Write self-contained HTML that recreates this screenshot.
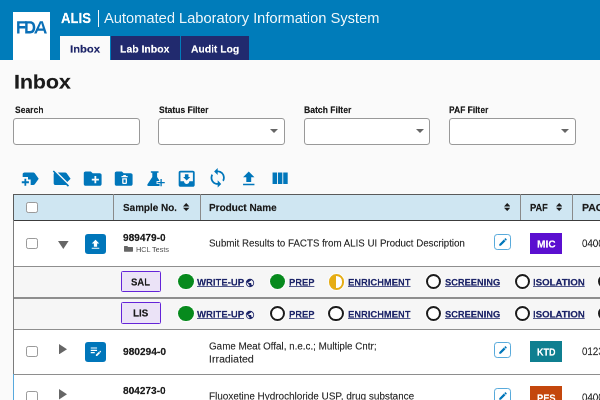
<!DOCTYPE html>
<html>
<head>
<meta charset="utf-8">
<title>ALIS</title>
<style>
*{box-sizing:border-box;margin:0;padding:0}
html,body{width:600px;height:400px;overflow:hidden;background:#fafafa;font-family:"Liberation Sans",sans-serif;color:#1b1b1b}
div,svg{position:absolute}
.t{white-space:nowrap;line-height:1;transform-origin:0 0;will-change:transform}
.b{font-weight:bold;-webkit-text-stroke:.35px}
.w{color:#fff}
.nv{color:#1c2468}
.g{color:#555}
.p{color:#2e2e2e;-webkit-text-stroke:.3px #2e2e2e}
.u{text-decoration:underline;text-decoration-thickness:2px;text-underline-offset:1.200px;text-decoration-skip-ink:none;text-decoration-color:rgba(28,36,104,.75)}
#hdr{left:0;top:0;width:600px;height:60px;background:#007cba}
#logo{left:13px;top:12px;width:37.2px;height:48px;background:#fff}
.tab{top:36px;height:24px;background:#212a6e}
.inp{top:118px;width:126.5px;height:26.5px;border:1px solid #999;border-radius:3px;background:#fff}
.arr{top:129.1px;width:0;height:0;border-left:4px solid transparent;border-right:4px solid transparent;border-top:4px solid #666}
.cb{left:26.1px;width:11.5px;height:11.3px;border:1.2px solid #9a9a9a;border-radius:2.2px;background:#fff}
.hl{left:13px;width:587px;height:1.200px;background:#8e8e8e}
.vl{top:194px;width:1px;height:26px;background:#8a8a8a}
.btn{left:85.2px;width:20.5px;height:20.6px;border-radius:3px;background:#0076ba}
.ed{left:494px;width:17px;height:16.300px;border:1.250px solid #58aadb;border-radius:3.200px;background:#fff}
.bdg{left:530px;width:32px;height:21.4px}
.tag{left:120.5px;width:40px;height:21.6px;border:1.7px solid #6424d8;border-radius:1.5px;background:#ebe3f7}
.c{width:15.300px;height:15.300px;border-radius:50%;box-shadow:0 0 0 1px rgba(255,255,255,.7)}
.cg{background:#078a1d}
.ce{background:#fff;border:2px solid #1b1b1b}
.ch{border:2.200px solid #e6ad14;background:linear-gradient(90deg,#e6ad14 46%,#fff 46%);margin-left:.2px;width:15.800px;height:15.800px}
</style>
</head>
<body>
<div id="hdr"></div>
<div id="logo"></div>
<svg style="left:17px;top:20.5px" width="31" height="13" viewBox="17 20.5 31 13"><g fill="#0a6fb7">
<path d="M17.1 20.7h9.5v2.3h-7.1v2.600h6.100v2.300h-6.100v5h-2.400z"/>
<path fill-rule="evenodd" d="M25.200 20.700h4.900c3.600 0 5.200 2.500 5.200 6.100 0 3.700-1.600 6.100-5.200 6.100h-4.900zM27.600 23v7.600h2.300c2.100 0 2.900-1.600 2.900-3.800 0-2.200-.8-3.800-2.900-3.800z"/>
<path d="M34.100 32.900l5.800-12.200h2.900l4.100 12.200h-2.500l-.8-2.700h-6.300l.9-2.200h4.700l-1.700-5.600-4.600 10.500z"/>
</g></svg>
<div style="left:98px;top:10px;width:1.2px;height:16.7px;background:#fff;opacity:.95"></div>
<div class="tab" style="left:60.3px;width:49.7px;background:#fafafa"></div>
<div class="tab" style="left:110.6px;width:69.4px"></div>
<div class="tab" style="left:181.300px;width:67.300px"></div>

<div id="ti1" class="t b w" style="left:61.10px;top:11.01px;font-size:29.00px;transform:scale(0.45420,.5);">ALIS</div>
<div id="ti2" class="t w" style="left:104.10px;top:11.01px;font-size:29.00px;transform:scale(0.50549,.5);opacity:.93;">Automated Laboratory Information System</div>
<div id="tb1" class="t b nv" style="left:70.14px;top:44.01px;font-size:20.40px;transform:scale(0.55251,.5);">Inbox</div>
<div id="tb2" class="t b w" style="left:120.30px;top:44.01px;font-size:20.40px;transform:scale(0.51309,.5);">Lab Inbox</div>
<div id="tb3" class="t b w" style="left:190.81px;top:44.01px;font-size:20.40px;transform:scale(0.50623,.5);">Audit Log</div>
<div id="h1" class="t b" style="left:14.11px;top:72.21px;font-size:39.20px;transform:scale(0.54295,.5);">Inbox</div>
<div id="l1" class="t b" style="left:14.82px;top:105.51px;font-size:17.60px;transform:scale(0.48462,.5);">Search</div>
<div id="l2" class="t b" style="left:158.73px;top:105.51px;font-size:17.60px;transform:scale(0.48601,.5);">Status Filter</div>
<div id="l3" class="t b" style="left:303.73px;top:105.51px;font-size:17.60px;transform:scale(0.48887,.5);">Batch Filter</div>
<div id="l4" class="t b" style="left:448.78px;top:105.51px;font-size:17.60px;transform:scale(0.48062,.5);">PAF Filter</div>
<div class="inp" style="left:13px"></div>
<div class="inp" style="left:158.2px"></div>
<div class="arr" style="left:270.2px"></div>
<div class="inp" style="left:303.6px"></div>
<div class="arr" style="left:415.6px"></div>
<div class="inp" style="left:449px"></div>
<div class="arr" style="left:561px"></div>
<svg style="left:19.90px;top:167.6px" width="21.36" height="21.36" viewBox="0 0 24 24" fill="#0076ba"><path d="M21 12l-4.37 6.16c-.37.52-.98.84-1.63.84h-3v-6H9v-3H3V7c0-1.1.9-2 2-2h10c.65 0 1.26.31 1.63.84L21 12zM10 15H7v-3H5v3H2v2h3v3h2v-3h3v-2z"/></svg>
<svg style="left:51.05px;top:167.6px" width="21.36" height="21.36" viewBox="0 0 24 24" fill="#0076ba"><path d="M3.250 2.750l17 17L19 21l-2-2H5c-1.100 0-2-.9-2-2V7c0-.55.230-1.050.590-1.410L2 4l1.250-1.250zM22 12l-4.370-6.160C17.270 5.330 16.670 5 16 5H7.660l10.700 10.730L22 12z"/></svg>
<svg style="left:82.20px;top:167.6px" width="21.36" height="21.36" viewBox="0 0 24 24" fill="#0076ba"><path d="M20 6h-8l-2-2H4c-1.1 0-2 .9-2 2v12c0 1.1.9 2 2 2h16c1.1 0 2-.9 2-2V8c0-1.1-.9-2-2-2zm-1 8h-3v3h-2v-3h-3v-2h3V9h2v3h3v2z"/></svg>
<svg style="left:113.35px;top:167.6px" width="21.36" height="21.36" viewBox="0 0 24 24" fill="#0076ba"><path fill-rule="evenodd" d="M22 8v10c0 1.1-.9 2-2 2H4c-1.1 0-2-.9-2-2V6c0-1.1.9-2 2-2h6l2 2h8c1.1 0 2 .9 2 2zM16.5 10V9h-2V8h-3v1h-2v1.5h7zM10.3 11.5v5c0 .8.7 1.500 1.500 1.500h2.400c.8 0 1.500-.7 1.500-1.500v-5zM11.800 13h2.400v3.500h-2.400z"/></svg>
<svg style="left:144.50px;top:167.6px" width="21.36" height="21.36" viewBox="0 0 24 24" fill="#0076ba"><path d="M6.600 3.600H15.200V5.400H13.600V10L19 18.300C19.600 19.300 19.100 20.100 18 20.100H3.800C2.700 20.100 2.200 19.300 2.800 18.300L8.200 10V5.400H6.600Z"/><path d="M16.400 11.300h3.400v3.400h3.400v3.400h-3.400v3.400h-3.400v-3.400h-3.400v-3.400h3.400z" fill="#fafafa"/><path d="M17.350 12.400h1.500v3.350h3.350v1.500h-3.350v3.350h-1.500v-3.350h-3.350v-1.500h3.350z"/></svg>
<svg style="left:175.65px;top:167.6px" width="21.36" height="21.36" viewBox="0 0 24 24" fill="#0076ba"><path fill-rule="evenodd" d="M19 3H5c-1.100 0-2 .9-2 2v14c0 1.100.9 2 2 2h14c1.100 0 2-.9 2-2V5c0-1.100-.9-2-2-2zM19 15h-4c0 1.660-1.350 3-3 3s-3-1.340-3-3H5V5h14zM16 10h-2V7h-4v3H8l4 4z"/></svg>
<svg style="left:206.80px;top:167.1px" width="21.36" height="21.36" viewBox="0 0 24 24" fill="#0076ba"><path d="M12 4V1L8 5l4 4V6c3.310 0 6 2.690 6 6 0 1.010-.25 1.970-.7 2.800l1.460 1.460C19.540 15.030 20 13.570 20 12c0-4.420-3.580-8-8-8zm0 14c-3.310 0-6-2.690-6-6 0-1.010.25-1.970.7-2.800L5.240 7.740C4.460 8.970 4 10.430 4 12c0 4.420 3.580 8 8 8v3l4-4-4-4v3z"/></svg>
<svg style="left:238.85px;top:168.56px" width="19.5" height="19.5" viewBox="0 0 24 24" fill="#0076ba"><path d="M9 16h6v-6h4l-7-7-7 7h4zm-4 2h14v2H5z"/></svg>
<svg style="left:269.10px;top:167.6px" width="21.36" height="21.36" viewBox="0 0 24 24" fill="#0076ba"><path d="M10 18h5V5h-5v13zm-6 0h5V5H4v13zM16 5v13h5V5h-5z"/></svg>
<div style="left:13px;top:194px;width:587px;height:206px;background:#fff"></div>
<div style="left:13px;top:194px;width:587px;height:26px;background:#cfe6f2"></div>
<div style="left:13px;top:266.500px;width:587px;height:62.500px;background:#f6f6f6"></div>
<div class="hl" style="top:194px;background:#5a5a5a"></div>
<div class="hl" style="top:219.500px;background:#3c3c3c"></div>
<div class="hl" style="top:266.3px"></div>
<div class="hl" style="top:297.4px"></div>
<div class="hl" style="top:328.7px"></div>
<div class="hl" style="top:373.8px"></div>
<div style="left:12.900px;top:194px;width:1.300px;height:180px;background:#7c7c7c"></div>
<div style="left:13px;top:194px;width:1px;height:26px;background:#5a5a5a"></div>
<div style="left:13px;top:374px;width:1px;height:26px;background:#58a9dd"></div>
<div class="vl" style="left:112.5px"></div>
<div class="vl" style="left:199.8px"></div>
<div class="vl" style="left:520.3px"></div>
<div class="vl" style="left:572.3px"></div>
<div id="th1" class="t b" style="left:122.99px;top:202.31px;font-size:21.00px;transform:scale(0.47202,.5);">Sample No.</div>
<div id="th2" class="t b" style="left:208.75px;top:202.31px;font-size:21.00px;transform:scale(0.47500,.5);">Product Name</div>
<div id="th3" class="t b" style="left:529.85px;top:202.31px;font-size:21.00px;transform:scale(0.43948,.5);">PAF</div>
<div id="th4" class="t b" style="left:582.01px;top:202.31px;font-size:21.00px;transform:scale(0.50000,.5);">PACE</div>
<svg style="left:183.3px;top:203.300px" width="6.400" height="8.100" viewBox="0 0 6.400 8.100" fill="#1b1b1b"><path d="M0 3.400L3.200 0l3.200 3.400zM0 4.700h6.400L3.200 8.100z"/></svg>
<svg style="left:504.1px;top:203.300px" width="6.400" height="8.100" viewBox="0 0 6.400 8.100" fill="#1b1b1b"><path d="M0 3.400L3.200 0l3.200 3.400zM0 4.700h6.400L3.200 8.100z"/></svg>
<svg style="left:555.8px;top:203.300px" width="6.400" height="8.100" viewBox="0 0 6.400 8.100" fill="#1b1b1b"><path d="M0 3.400L3.200 0l3.200 3.400zM0 4.700h6.400L3.200 8.100z"/></svg>
<div class="cb" style="top:201.700px"></div>
<div class="cb" style="top:238.2px"></div>
<svg style="left:58px;top:241.0px" width="10.600" height="8" viewBox="0 0 10.600 8" fill="#666"><path d="M0 0h10.600L5.300 8z"/></svg>
<div class="btn" style="top:233.7px"></div>
<svg style="left:89.200px;top:238.4px" width="13" height="13" viewBox="0 0 24 24" fill="#fff"><path d="M9 16h6v-6h4l-7-7-7 7h4zm-4 2h14v2H5z"/></svg>
<div id="s1" class="t b" style="left:123.18px;top:232.60px;font-size:19.60px;transform:scale(0.51428,.5);">989479-0</div>
<svg style="left:124px;top:246.4px" width="9" height="5.800" viewBox="0 0 9 5.800" fill="#666"><path d="M0 .5C0 .2.200 0 .5 0h2.800l.9.900h4.300c.3 0 .5.200.5.500v3.900c0 .3-.2.500-.5.500h-8c-.3 0-.5-.2-.5-.5z"/></svg>
<div id="f1" class="t g" style="left:136.29px;top:246.01px;font-size:14.00px;transform:scale(0.51682,.5);">HCL Tests</div>
<div id="p1" class="t p" style="left:209.29px;top:237.50px;font-size:20.00px;transform:scale(0.48667,.5);">Submit Results to FACTS from ALIS UI Product Description</div>
<div class="ed" style="top:233.7px"></div>
<svg style="left:497.500px;top:237.3px" width="10" height="10" viewBox="0 0 24 24" fill="#0076ba"><path d="M3 17.250V21h3.750L17.810 9.940l-3.750-3.750L3 17.250zM20.710 7.040c.39-.39.390-1.020 0-1.410l-2.340-2.340c-.39-.39-1.020-.39-1.410 0l-1.830 1.830 3.750 3.750 1.830-1.830z"/></svg>
<div class="bdg" style="top:232.6px;background:#5b0fd0"></div>
<div id="b1" class="t b w" style="left:537.00px;top:238.71px;font-size:20.60px;transform:scale(0.49189,.5);">MIC</div>
<div id="c1" class="t p" style="left:581.92px;top:237.80px;font-size:21.60px;transform:scale(0.45000,.5);">04000</div>
<div class="cb" style="top:346.1px"></div>
<svg style="left:58.600px;top:344.1px" width="8" height="10.400" viewBox="0 0 8 10.400" fill="#666"><path d="M0 0v10.400L8 5.200z"/></svg>
<div class="btn" style="top:341.6px"></div>
<svg style="left:88.900px;top:344.1px" width="13.800" height="13.800" viewBox="0 0 24 24" fill="#fff"><path d="M3 10h11v2H3zm0-2h11V6H3zm0 8h7v-2H3zm15.010-3.130l.71-.71c.39-.39 1.020-.39 1.410 0l.71.710c.39.390.39 1.020 0 1.410l-.71.710zm-.71.710l-5.300 5.300V21h2.120l5.300-5.300z"/></svg>
<div id="s2" class="t b" style="left:122.96px;top:346.60px;font-size:19.60px;transform:scale(0.51876,.5);">980294-0</div>
<div id="p2a" class="t p" style="left:208.64px;top:340.60px;font-size:20.00px;transform:scale(0.49148,.5);">Game Meat Offal, n.e.c.; Multiple Cntr;</div>
<div id="p2b" class="t p" style="left:208.50px;top:353.60px;font-size:20.00px;transform:scale(0.52999,.5);">Irradiated</div>
<div class="ed" style="top:341.6px"></div>
<svg style="left:497.500px;top:345.2px" width="10" height="10" viewBox="0 0 24 24" fill="#0076ba"><path d="M3 17.250V21h3.750L17.810 9.940l-3.750-3.750L3 17.250zM20.710 7.040c.39-.39.390-1.020 0-1.410l-2.340-2.340c-.39-.39-1.020-.39-1.410 0l-1.830 1.830 3.750 3.750 1.830-1.830z"/></svg>
<div class="bdg" style="top:340.5px;background:#0f7f90"></div>
<div id="b2" class="t b w" style="left:536.69px;top:346.60px;font-size:20.60px;transform:scale(0.43675,.5);">KTD</div>
<div id="c2" class="t p" style="left:581.92px;top:345.71px;font-size:21.60px;transform:scale(0.45000,.5);">01230</div>
<div class="cb" style="top:391.4px"></div>
<svg style="left:58.600px;top:389.4px" width="8" height="10.400" viewBox="0 0 8 10.400" fill="#666"><path d="M0 0v10.400L8 5.200z"/></svg>
<div id="s3" class="t b" style="left:123.17px;top:385.81px;font-size:19.60px;transform:scale(0.51434,.5);">804273-0</div>
<svg style="left:124px;top:399.6px" width="9" height="5.800" viewBox="0 0 9 5.800" fill="#666"><path d="M0 .5C0 .2.200 0 .5 0h2.800l.9.900h4.300c.3 0 .5.200.5.500v3.900c0 .3-.2.500-.5.500h-8c-.3 0-.5-.2-.5-.5z"/></svg>
<div id="f3" class="t g" style="left:136.27px;top:399.21px;font-size:14.00px;transform:scale(0.50000,.5);">HCL</div>
<div id="p3" class="t p" style="left:208.82px;top:390.71px;font-size:20.00px;transform:scale(0.49655,.5);">Fluoxetine Hydrochloride USP, drug substance</div>
<div class="ed" style="top:387.5px"></div>
<svg style="left:497.500px;top:391.1px" width="10" height="10" viewBox="0 0 24 24" fill="#0076ba"><path d="M3 17.250V21h3.750L17.810 9.940l-3.750-3.750L3 17.250zM20.710 7.040c.39-.39.390-1.020 0-1.410l-2.340-2.340c-.39-.39-1.020-.39-1.410 0l-1.830 1.830 3.750 3.750 1.830-1.830z"/></svg>
<div class="bdg" style="top:386.4px;background:#c4470d"></div>
<div id="b3" class="t b w" style="left:536.55px;top:392.51px;font-size:20.60px;transform:scale(0.44918,.5);">PES</div>
<div id="c3" class="t p" style="left:581.92px;top:391.60px;font-size:21.60px;transform:scale(0.45000,.5);">04000</div>
<div class="tag" style="top:270.7px"></div>
<div id="g1" class="t b" style="left:131.21px;top:276.71px;font-size:20.00px;transform:scale(0.47452,.5);">SAL</div>
<div class="c cg" style="left:178.4px;top:274.1px"></div>
<div id="k10" class="t b nv u" style="left:197.16px;top:278.21px;font-size:18.00px;transform:scale(0.52933,.5);">WRITE-UP</div>
<div class="c cg" style="left:269.8px;top:274.1px"></div>
<div id="k11" class="t b nv u" style="left:288.77px;top:278.21px;font-size:18.00px;transform:scale(0.51901,.5);">PREP</div>
<div class="c ch" style="left:328.4px;top:274.1px"></div>
<div id="k12" class="t b nv u" style="left:348.46px;top:278.21px;font-size:18.00px;transform:scale(0.52078,.5);">ENRICHMENT</div>
<div class="c ce" style="left:426.1px;top:274.1px"></div>
<div id="k13" class="t b nv u" style="left:445.07px;top:278.21px;font-size:18.00px;transform:scale(0.51567,.5);">SCREENING</div>
<div class="c ce" style="left:514.6px;top:274.1px"></div>
<div id="k14" class="t b nv u" style="left:533.28px;top:278.21px;font-size:18.00px;transform:scale(0.53517,.5);">ISOLATION</div>
<div class="c ce" style="left:598.1px;top:274.1px"></div>
<svg style="left:245.050px;top:278.4px" width="10" height="10" viewBox="0 0 24 24"><circle cx="12" cy="12" r="9.500" fill="#f6f6f6"/><path fill="#1c2468" d="M12 2C6.480 2 2 6.480 2 12s4.480 10 10 10 10-4.480 10-10S17.520 2 12 2zm-1 17.930c-3.950-.49-7-3.850-7-7.930 0-.62.080-1.210.210-1.790L9 15v1c0 1.100.9 2 2 2v1.930zm6.900-2.540c-.26-.81-1-1.390-1.900-1.390h-1v-3c0-.55-.45-1-1-1H8v-2h2c.55 0 1-.45 1-1V7h2c1.100 0 2-.9 2-2v-.41c2.930 1.190 5 4.060 5 7.410 0 2.080-.8 3.970-2.100 5.390z"/></svg>
<div class="tag" style="top:302.2px"></div>
<div id="g2" class="t b" style="left:133.03px;top:308.21px;font-size:20.00px;transform:scale(0.48938,.5);">LIS</div>
<div class="c cg" style="left:178.4px;top:306.0px"></div>
<div id="k20" class="t b nv u" style="left:197.16px;top:309.71px;font-size:18.00px;transform:scale(0.52933,.5);">WRITE-UP</div>
<div class="c ce" style="left:269.8px;top:306.0px"></div>
<div id="k21" class="t b nv u" style="left:288.77px;top:309.71px;font-size:18.00px;transform:scale(0.51901,.5);">PREP</div>
<div class="c ce" style="left:328.4px;top:306.0px"></div>
<div id="k22" class="t b nv u" style="left:348.46px;top:309.71px;font-size:18.00px;transform:scale(0.52078,.5);">ENRICHMENT</div>
<div class="c ce" style="left:426.1px;top:306.0px"></div>
<div id="k23" class="t b nv u" style="left:445.07px;top:309.71px;font-size:18.00px;transform:scale(0.51567,.5);">SCREENING</div>
<div class="c ce" style="left:514.6px;top:306.0px"></div>
<div id="k24" class="t b nv u" style="left:533.28px;top:309.71px;font-size:18.00px;transform:scale(0.53517,.5);">ISOLATION</div>
<div class="c ce" style="left:598.1px;top:306.0px"></div>
<svg style="left:245.050px;top:309.9px" width="10" height="10" viewBox="0 0 24 24"><circle cx="12" cy="12" r="9.500" fill="#f6f6f6"/><path fill="#1c2468" d="M12 2C6.480 2 2 6.480 2 12s4.480 10 10 10 10-4.480 10-10S17.520 2 12 2zm-1 17.930c-3.950-.49-7-3.850-7-7.930 0-.62.080-1.210.210-1.790L9 15v1c0 1.100.9 2 2 2v1.930zm6.900-2.540c-.26-.81-1-1.390-1.900-1.390h-1v-3c0-.55-.45-1-1-1H8v-2h2c.55 0 1-.45 1-1V7h2c1.100 0 2-.9 2-2v-.41c2.930 1.190 5 4.060 5 7.410 0 2.080-.8 3.970-2.100 5.390z"/></svg>
</body>
</html>
